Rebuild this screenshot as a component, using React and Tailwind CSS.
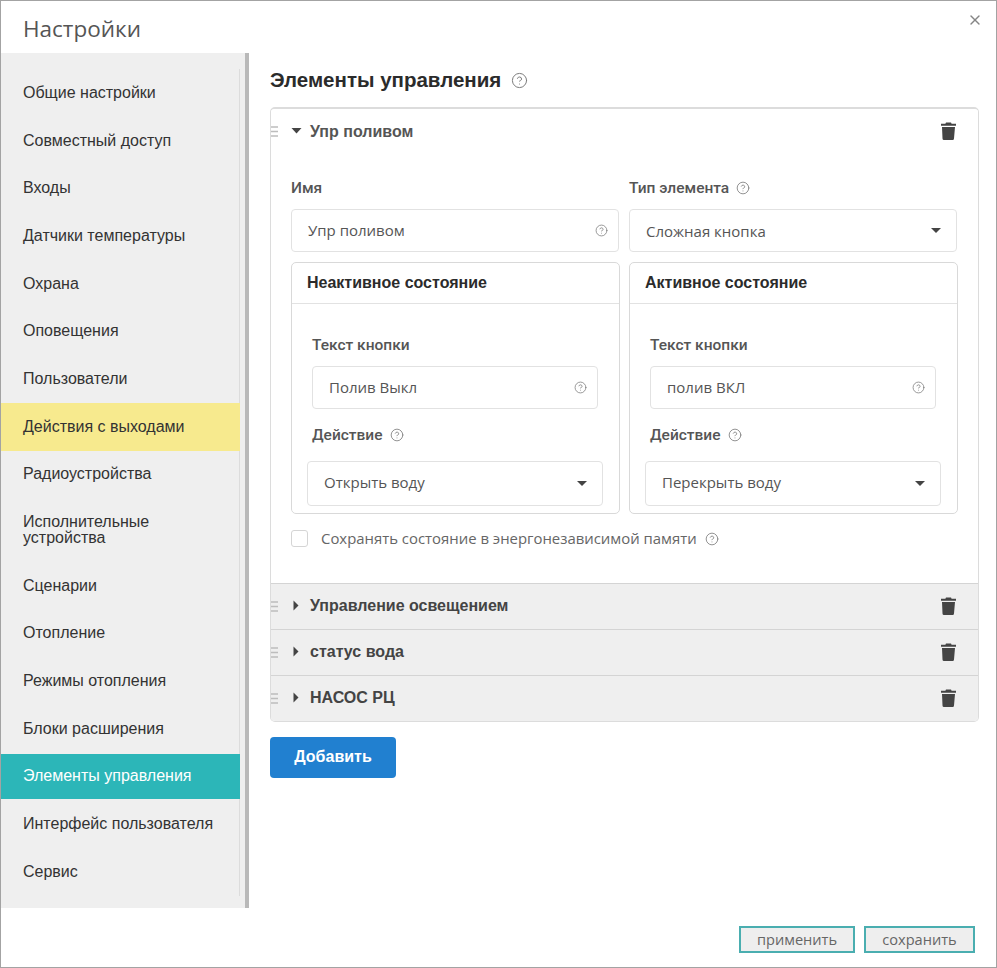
import { CircleHelp, X } from 'lucide-react';

const menu = [
  'Общие настройки',
  'Совместный доступ',
  'Входы',
  'Датчики температуры',
  'Охрана',
  'Оповещения',
  'Пользователи',
  'Действия с выходами',
  'Радиоустройства',
  'Исполнительные устройства',
  'Сценарии',
  'Отопление',
  'Режимы отопления',
  'Блоки расширения',
  'Элементы управления',
  'Интерфейс пользователя',
  'Сервис',
];

function Help({ size = 14, className = '' }) {
  return <CircleHelp size={size} strokeWidth={1.4} className={`shrink-0 text-[#7a7a7a] ${className}`} />;
}

function Trash() {
  return (
    <svg width="15" height="18" viewBox="0 0 15 18" className="shrink-0">
      <path d="M5 0.5h5l0.6 1.2H15v2H0v-2h4.4z M1 5h13l-1 11.5a1.5 1.5 0 0 1-1.5 1.5h-8.500a1.500 1.500 0 0 1-1.500-1.500z" fill="#444444" />
    </svg>
  );
}

function Handle() {
  return (
    <svg width="7" height="11" viewBox="0 0 7 11" className="shrink-0">
      <path d="M0 1h7M0 5.500h7M0 10h7" stroke="#bdbdbd" strokeWidth="1.500" />
    </svg>
  );
}

function Caret({ open }) {
  return open ? (
    <svg width="11" height="6" viewBox="0 0 11 6"><path d="M0.500 0h10l-5 5.500z" fill="#444444" /></svg>
  ) : (
    <svg width="6" height="11" viewBox="0 0 6 11"><path d="M0.500 0.500v10l5-5z" fill="#444444" /></svg>
  );
}

function SelectBox({ value, className = '', textClassName = 'pb-[2px]' }) {
  return (
    <div className={`flex items-center justify-between rounded-[4px] border border-[#e2e2e2] bg-white pl-4 pr-[15px] ${className}`}>
      <span className={`font-['Open_Sans',sans-serif] text-[15px] text-[#555555] ${textClassName}`}>{value}</span>
      <svg width="10" height="5" viewBox="0 0 10 5"><path d="M0 0h10l-5 5z" fill="#444444" /></svg>
    </div>
  );
}

function InputBox({ value, className = '' }) {
  return (
    <div className={`flex items-center justify-between rounded-[4px] border border-[#e2e2e2] bg-white pl-4 pr-[10px] ${className}`}>
      <span className="pb-[1px] font-['Open_Sans',sans-serif] text-[15px] text-[#555555]">{value}</span>
      <Help size={13} />
    </div>
  );
}

function StatePanel({ title, text, action }) {
  return (
    <div className="h-[252px] rounded-[5px] border border-[#d9d9d9] bg-white">
      <div className="flex h-[41px] items-center border-b border-[#e2e2e2] pl-[15px] font-['Liberation_Sans',sans-serif] text-[16px] font-bold text-[#2b2b2b]">{title}</div>
      <div className="pl-[15px] pr-[16px] pt-[31px]">
        <div className="pl-[5px] text-[15.500px] font-medium leading-5 text-[#555555]">{text.label}</div>
        <InputBox value={text.value} className="mx-[5px] mt-[11px] h-[43px]" />
        <div className="mt-[16px] flex items-center gap-[7px] pl-[5px] text-[15.500px] font-medium leading-5 text-[#555555]">
          {action.label}
          <Help size={14} />
        </div>
        <SelectBox value={action.value} className="mt-[16px] h-[45px]" />
      </div>
    </div>
  );
}

function CollapsedRow({ title }) {
  return (
    <div className="flex h-[46px] items-center border-t border-[#d4d4d4] bg-[#efefef] pr-[22px]">
      <span className="mb-[1px] flex"><Handle /></span>
      <span className="mb-[3px] ml-[15px] flex w-[17px]"><Caret /></span>
      <span className="pb-[2px] font-['Liberation_Sans',sans-serif] text-[16px] font-bold text-[#444444]">{title}</span>
      <span className="mb-[2px] ml-auto flex"><Trash /></span>
    </div>
  );
}

export default function App() {
  return (
    <div className="relative flex h-[968px] w-[997px] flex-col overflow-hidden border border-[#a3a3a3] bg-white font-['Roboto',sans-serif]">
      <header className="h-[52px] shrink-0 pl-[22px] pt-[12px] font-['Open_Sans',sans-serif] text-[22.500px] leading-8 text-[#555555]">
        Настройки
      </header>
      <button className="absolute right-[13px] top-[11px] text-[#858585]">
        <X size={16} strokeWidth={2} />
      </button>

      <div className="flex min-h-0 flex-1">
        <aside className="h-[855px] w-[248px] shrink-0 border-r-4 border-[#b9b9b9] bg-[#efefef] pt-[16px] font-['Liberation_Sans',sans-serif]">
          <nav className="h-[827px] w-[239px] border-r border-[#dcdcdc]">
            {menu.map((item) => (
              <div
                key={item}
                className={`-mr-[1px] pl-[22px] pr-5 text-[16px] leading-4 ${
                  item === 'Действия с выходами'
                    ? 'bg-[#f7ea8e] py-[15.850px] text-[#333333]'
                    : item === 'Элементы управления'
                      ? 'my-[1.350px] bg-[#2cb6b8] py-[14.500px] text-white'
                      : 'py-[15.850px] text-[#333333]'
                }`}
              >
                {item}
              </div>
            ))}
          </nav>
        </aside>

        <main className="min-w-0 flex-1 pl-[21px] pr-[18px] pt-[15px]">
          <h1 className="flex h-6 items-center gap-[10px] font-['Liberation_Sans',sans-serif] text-[20.500px] font-bold text-[#2b2b2b]">
            Элементы управления
            <Help size={17} />
          </h1>

          <section className="mt-[15px] w-[709px] overflow-hidden rounded-[5px] border border-t-2 border-[#dcdcdc]">
            <div className="h-[474px] bg-white">
              <div className="flex h-[45px] items-center pr-[22px]">
                <Handle />
                <span className="mb-[1px] ml-[13px] flex w-[19px]"><Caret open /></span>
                <span className="font-['Liberation_Sans',sans-serif] text-[16px] font-bold text-[#555555]">Упр поливом</span>
                <span className="mb-[2px] ml-auto flex"><Trash /></span>
              </div>

              <div className="px-[20px] pt-[24px]">
                <div className="grid grid-cols-[329px_329px] gap-x-[9px]">
                  <div className="text-[15.500px] font-medium leading-5 text-[#555555]">Имя</div>
                  <div className="flex items-center gap-[7px] text-[15.500px] font-medium leading-5 text-[#555555]">
                    Тип элемента
                    <Help size={14} />
                  </div>
                  <InputBox value="Упр поливом" className="mr-[1px] mt-[11px] h-[43px]" />
                  <SelectBox value="Сложная кнопка" textClassName="pt-[1px]" className="mr-[1px] mt-[11px] h-[43px]" />
                </div>

                <div className="mt-[10px] grid grid-cols-[329px_329px] gap-x-[9px]">
                  <StatePanel
                    title="Неактивное состояние"
                    text={{ label: 'Текст кнопки', value: 'Полив Выкл' }}
                    action={{ label: 'Действие', value: 'Открыть воду' }}
                  />
                  <StatePanel
                    title="Активное состояние"
                    text={{ label: 'Текст кнопки', value: 'полив ВКЛ' }}
                    action={{ label: 'Действие', value: 'Перекрыть воду' }}
                  />
                </div>

                <div className="mt-[13px] flex items-center">
                  <span className="h-[17px] w-[17px] rounded-[3px] border border-[#d5d5d5] bg-white" />
                  <span className="ml-[13px] pb-[1px] font-['Open_Sans',sans-serif] text-[14.900px] text-[#666666]">
                    Сохранять состояние в энергонезависимой памяти
                  </span>
                  <Help size={14} className="ml-[8px]" />
                </div>
              </div>
            </div>

            <CollapsedRow title="Управление освещением" />
            <CollapsedRow title="статус вода" />
            <CollapsedRow title="НАСОС РЦ" />
          </section>

          <button className="mt-[15px] h-[41px] w-[126px] rounded-[4px] bg-[#2180d0] pb-[2px] font-['Liberation_Sans',sans-serif] text-[16px] font-bold text-white">
            Добавить
          </button>
        </main>
      </div>

      <footer className="flex h-[58px] shrink-0 items-start justify-end gap-[9px] pr-[21px] pt-[17px] font-['Open_Sans',sans-serif] text-[14.600px] text-[#666666]">
        <button className="h-[27px] w-[116px] border-2 border-[#4aaeb0] bg-[#eeeeee]">применить</button>
        <button className="h-[27px] w-[111px] border-2 border-[#4aaeb0] bg-[#eeeeee]">сохранить</button>
      </footer>
    </div>
  );
}
